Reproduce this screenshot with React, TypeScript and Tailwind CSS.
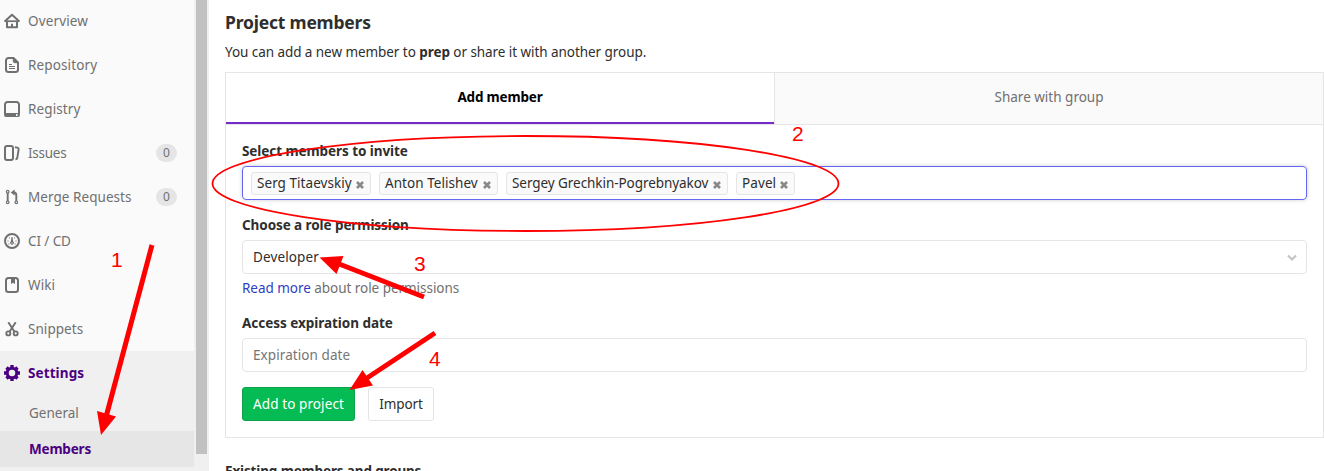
import type { ReactNode } from "react";

function Icon({ children, className = "" }: { children: ReactNode; className?: string }) {
  return (
    <svg viewBox="0 0 16 16" className={`block h-4 w-4 shrink-0 ${className}`} fill="none" stroke="currentColor" strokeWidth="2" strokeLinejoin="round">
      {children}
    </svg>
  );
}

const icons = {
  overview: (
    <Icon>
      <path d="M1.2 8 8 1.700l6.800 6.300" strokeWidth="2" strokeLinecap="round" />
      <path d="M1 8.200h14" strokeWidth="1.700" />
      <path d="M3 8v6.200h10V8" />
      <path d="M7 10.800h2V14H7z" fill="currentColor" stroke="none" />
    </Icon>
  ),
  repository: (
    <Icon>
      <path d="M9.5 1H4.5A2.5 2.5 0 0 0 2 3.5v9A2.5 2.5 0 0 0 4.5 15h7a2.5 2.5 0 0 0 2.5-2.5V5.500z" />
      <path d="M9.3 1v3.200a1.500 1.500 0 0 0 1.500 1.500H14z" fill="currentColor" strokeWidth="1" />
      <path d="M5 7.500h3M5 9.500h6M5 11.500h6" strokeWidth="1" />
    </Icon>
  ),
  registry: (
    <Icon>
      <path d="M1 13V3.500A2.500 2.500 0 0 1 3.500 1h9A2.500 2.500 0 0 1 15 3.500V13" />
      <path d="M0 14a2 2 0 0 1 2-2h12a2 2 0 0 1 0 4H2a2 2 0 0 1-2-2zm12-1v2h1.500v-2z" fill="currentColor" fillRule="evenodd" stroke="none" />
    </Icon>
  ),
  issues: (
    <Icon>
      <rect x="1" y="1" width="8" height="14" rx="2" />
      <path d="M11 2.200l2.300.4a1.600 1.600 0 0 1 1.300 1.900l-1.300 8.300a2 2 0 0 1-1.800 1.600" strokeWidth="1.900" />
    </Icon>
  ),
  merge: (
    <Icon>
      <circle cx="3.700" cy="2.700" r="1.300" strokeWidth="1.200" />
      <circle cx="3.700" cy="13.300" r="1.300" strokeWidth="1.200" />
      <circle cx="12.300" cy="13.300" r="1.300" strokeWidth="1.200" />
      <path d="M3.700 4v8M12.300 12V6.300c0-1.900-.7-2.800-2.300-2.800" strokeWidth="1.900" />
      <path d="M10.600.5v6L6.700 3.500z" fill="currentColor" stroke="none" />
    </Icon>
  ),
  cicd: (
    <Icon>
      <circle cx="8" cy="8" r="7" />
      <path d="M7.500 4h1l.6 4.300a1.900 1.900 0 1 1-2.200 0z" fill="currentColor" stroke="none" />
      <circle cx="8" cy="9.900" r=".6" fill="#fafafa" stroke="none" />
      <path d="M5 4.500h1v1H5zM10 4.500h1v1h-1zM3.500 7.500h1v1h-1zM11.500 7.500h1v1h-1zM4.300 10.500h1v1h-1zM10.700 10.500h1v1h-1z" fill="currentColor" stroke="none" />
    </Icon>
  ),
  wiki: (
    <Icon>
      <rect x="2" y="1" width="12" height="14" rx="2.500" />
      <path d="M7 1.500h4v5.500L9 5.800 7 7z" fill="currentColor" stroke="none" />
    </Icon>
  ),
  snippets: (
    <Icon>
      <circle cx="4.300" cy="12.400" r="2" strokeWidth="1.900" />
      <circle cx="11.700" cy="12.400" r="2" strokeWidth="1.900" />
      <path d="M4.300 1.200 10.500 10.800M11.700 1.200 5.500 10.800" strokeWidth="1.900" />
    </Icon>
  ),
  settings: (
    <Icon>
      <circle cx="8" cy="8" r="4.800" strokeWidth="3.100" />
      <path d="M8 0v2.600M8 13.400V16M0 8h2.600M13.400 8H16M2.500 2.500l1.800 1.800M11.700 11.700l1.800 1.800M13.500 2.500l-1.800 1.800M4.300 11.700l-1.800 1.800" strokeWidth="3.400" />
    </Icon>
  ),
};

const navItems = [
  { label: "Overview", icon: icons.overview, tracking: "tracking-[0.15px]" },
  { label: "Repository", icon: icons.repository, tracking: "tracking-[0.12px]" },
  { label: "Registry", icon: icons.registry, tracking: "tracking-[0.12px]" },
  { label: "Issues", icon: icons.issues, tracking: "tracking-[-0.25px]", count: 0 },
  { label: "Merge Requests", icon: icons.merge, tracking: "tracking-[0.05px]", count: 0 },
  { label: "CI / CD", icon: icons.cicd, tracking: "tracking-[-0.1px]" },
  { label: "Wiki", icon: icons.wiki, tracking: "tracking-[0.1px]" },
  { label: "Snippets", icon: icons.snippets, tracking: "tracking-[0.05px]" },
];

function Sidebar() {
  return (
    <nav className="w-[194px] shrink-0 bg-[#fafafa] text-[#707070]">
      <div className="-mt-px">
        {navItems.map((item) => (
          <a key={item.label} className="flex h-11 items-center pl-1 pr-[17px]">
            {item.icon}
            <span className={`ml-2 grow whitespace-nowrap ${item.tracking}`}>{item.label}</span>
            {item.count !== undefined && (
              <span className="flex h-[18px] w-[21px] items-center justify-center rounded-full bg-[#e5e5e5] text-xs">{item.count}</span>
            )}
          </a>
        ))}
      </div>
      <div className="h-[120px] bg-[#f0f0f0]">
        <a className="flex h-11 items-center pl-1 font-bold text-[#4b0082]">
          {icons.settings}
          <span className="ml-2 tracking-[0.1px]">Settings</span>
        </a>
        <a className="flex h-9 items-center pl-[29px]">General</a>
        <a className="flex h-9 items-center bg-[#e6e6e6] pl-[29px] font-bold tracking-[-0.2px] text-[#4b0082]">Members</a>
      </div>
    </nav>
  );
}

const members = [
  { name: "Serg Titaevskiy", width: "w-[120px]", tracking: "tracking-[0.05px]" },
  { name: "Anton Telishev", width: "w-[119px]", tracking: "tracking-[0.05px]" },
  { name: "Sergey Grechkin-Pogrebnyakov", width: "w-[222px]", tracking: "tracking-[-0.06px]" },
  { name: "Pavel", width: "w-[59px]", tracking: "tracking-[0.1px]" },
];

function Chip({ name, width, tracking }: { name: string; width: string; tracking: string }) {
  return (
    <span className={`flex h-[23px] items-center justify-between rounded-[3px] border border-[#e5e5e5] bg-[#fafafa] pl-[5px] pr-1.5 ${width}`}>
      <span className={`whitespace-nowrap ${tracking}`}>{name}</span>
      <svg viewBox="0 0 8 8" className="mt-[3px] h-2 w-2 shrink-0" stroke="#888" strokeWidth="2.600">
        <path d="M1 1 7 7M7 1 1 7" />
      </svg>
    </span>
  );
}

function Annotations() {
  return (
    <svg viewBox="0 0 1324 471" className="pointer-events-none absolute inset-0 h-[471px] w-[1324px]" fill="#f00" fontFamily="'Liberation Sans', Arial, sans-serif" fontSize="21">
      <ellipse cx="525.500" cy="183.500" rx="313" ry="47.500" fill="none" stroke="#f00" strokeWidth="1.800" />
      <path d="M152 245 106 417M424 297 334 262M435 333 364 380" fill="none" stroke="#f00" strokeWidth="5" />
      <path d="M101 435 97 411 116 416.500zM319.500 257.500 343.500 256 336.500 274zM349.500 390 362.500 370 373 385.500z" />
      <text x="111" y="267">1</text>
      <text x="792" y="141">2</text>
      <text x="414" y="271">3</text>
      <text x="429" y="366">4</text>
    </svg>
  );
}

export default function App() {
  return (
    <div className="relative flex h-[471px] w-[1324px] overflow-hidden bg-white font-['Noto_Sans',sans-serif] text-[13.5px] leading-5 text-[#2e2e2e]">
      <Sidebar />
      <div className="w-[15px] shrink-0 bg-[#f0f0f0] px-0.5">
        <div className="h-[454px] w-[11px] bg-[#c1c1c1]" />
      </div>
      <main className="w-[1115px] pl-4">
        <h1 className="pt-3 text-[17.5px] font-bold leading-5 tracking-[-0.2px]">Project members</h1>
        <p className="mt-2.5 h-[30px] tracking-[-0.06px]">
          You can add a new member to <b className="font-bold">prep</b> or share it with another group.
        </p>
        <section className="h-[366px] border border-[#e5e5e5]">
          <div className="flex h-[52px] border-b border-[#e5e5e5] text-center leading-[48px]">
            <div className="w-[548px] border-b-2 border-[#752bc9] font-bold tracking-[-0.18px] text-black">Add member</div>
            <div className="grow border-l border-[#e5e5e5] bg-[#fafafa] text-[#707070]">Share with group</div>
          </div>
          <div className="px-4 pt-4">
            <label className="block font-bold tracking-[-0.07px]">Select members to invite</label>
            <div className="mt-[5px] flex h-[34px] items-center gap-2 rounded border border-[#6666f5] px-2 shadow-[0_0_4px_rgba(0,0,0,0.2)]">
              {members.map((member) => (
                <Chip key={member.name} {...member} />
              ))}
            </div>
            <label className="mt-[15px] block font-bold tracking-[-0.08px]">Choose a role permission</label>
            <div className="mt-[5px] flex h-[34px] items-center justify-between rounded-sm border border-[#e5e5e5] pl-2.5 pr-[9px]">
              <span className="tracking-[0.12px]">Developer</span>
              <svg viewBox="0 0 10 8" className="mt-0.5 h-2 w-2.5" fill="none" stroke="#c4c4c4" strokeWidth="2.200">
                <path d="M1 1.500 5 5.500 9 1.500" />
              </svg>
            </div>
            <p className="mt-1 tracking-[-0.04px] text-[#707070]">
              <a className="text-[#303fc0]">Read more</a> about role permissions
            </p>
            <label className="mt-[15px] block font-bold tracking-[-0.03px]">Access expiration date</label>
            <div className="mt-[5px] flex h-[34px] items-center rounded-sm border border-[#e5e5e5] pl-2.5 tracking-[0.08px] text-[#757575]">Expiration date</div>
            <div className="mt-[15px] flex gap-[13px]">
              <button className="h-[34px] w-[113px] whitespace-nowrap rounded-[3px] border border-[#12a149] bg-[#05bc54] tracking-[0.1px] text-white">Add to project</button>
              <button className="h-[34px] w-[66px] rounded-[3px] border border-[#e5e5e5] tracking-[-0.1px]">Import</button>
            </div>
          </div>
        </section>
        <h2 className="mt-[23px] font-bold tracking-[-0.14px]">Existing members and groups</h2>
      </main>
      <Annotations />
    </div>
  );
}
